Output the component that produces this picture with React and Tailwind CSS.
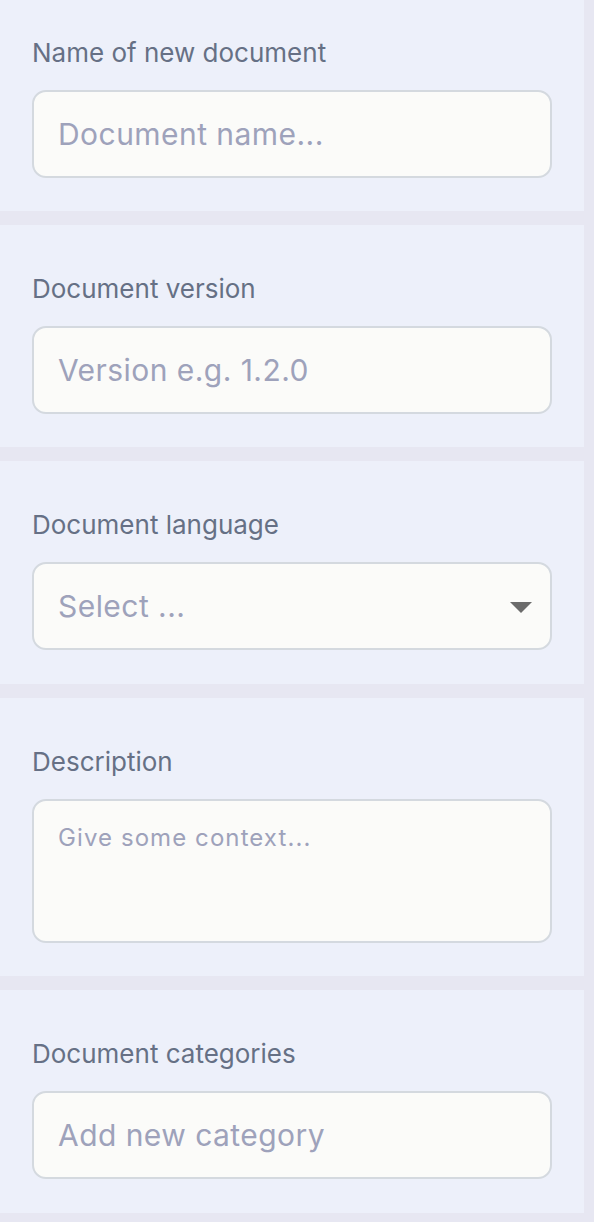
import React from 'react'

const font = { fontFamily: 'Inter, "Noto Sans", sans-serif' }

function Field({ label, first, tall, children }) {
  return (
    <div
      className={`w-[584px] bg-[#edf0fa] px-8 ${first ? 'pt-[35px]' : 'pt-[46px]'} ${tall ? 'pb-[34px]' : 'pb-[33px]'}`}
    >
      <label className="block text-[26px] leading-[36px] text-[#667085] mb-[19px]">{label}</label>
      {children}
    </div>
  )
}

const box = 'w-[520px] rounded-[14px] border-2 border-[#d4d9df] bg-[#fbfbf9] outline-none'
const input = `${box} h-[88px] px-6 text-[30px] tracking-[0.015em] text-[#4b5563] placeholder:text-[#9ea2bb]`

export default function App() {
  return (
    <div className="min-h-[1222px] w-[594px] bg-[#e7e7f2] flex flex-col gap-[14px]" style={font}>
      <Field label="Name of new document" first>
        <input className={input} placeholder="Document name..." />
      </Field>
      <Field label="Document version">
        <input className={input} placeholder="Version e.g. 1.2.0" />
      </Field>
      <Field label="Document language" tall>
        <div className={`${box} h-[88px] pl-6 pr-[18px] flex items-center justify-between`}>
          <span className="text-[30px] tracking-[0.015em] text-[#9ea2bb]">Select ...</span>
          <svg width="22" height="12" viewBox="0 0 22 12" className="mt-[4px]">
            <path d="M0 0 H22 L11 11 Z" fill="#6b6b6b" />
          </svg>
        </div>
      </Field>
      <Field label="Description">
        <textarea
          className={`${box} block h-[144px] px-6 pt-[20px] resize-none text-[24px] tracking-[0.045em] leading-[34px] text-[#4b5563] placeholder:text-[#9ea2bb]`}
          placeholder="Give some context..."
        />
      </Field>
      <Field label="Document categories" tall>
        <input className={input} placeholder="Add new category" />
      </Field>
    </div>
  )
}
